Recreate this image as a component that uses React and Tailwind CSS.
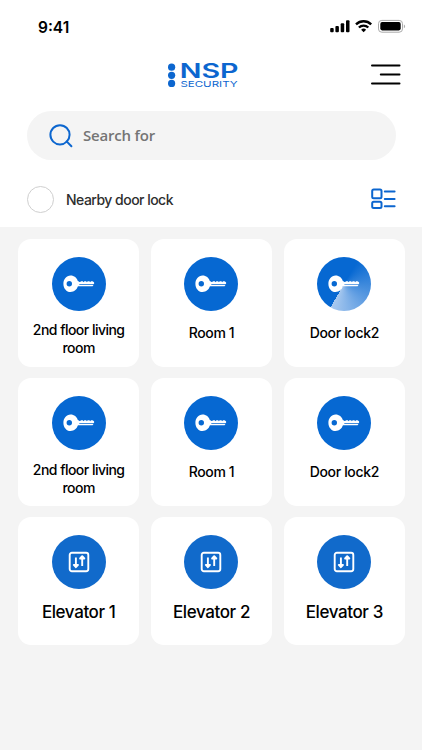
import React, { useState } from "react";

const DEVICES = [
  { name: "2nd floor living room", type: "key" },
  { name: "Room 1", type: "key" },
  { name: "Door lock2", type: "key", opening: true },
  { name: "2nd floor living room", type: "key" },
  { name: "Room 1", type: "key" },
  { name: "Door lock2", type: "key" },
  { name: "Elevator 1", type: "elevator" },
  { name: "Elevator 2", type: "elevator" },
  { name: "Elevator 3", type: "elevator" },
];

const StatusBar = () => (
  <div className="flex h-[52px] items-start justify-between pl-[38px] pr-[16px]">
    <span className="pt-[18px] text-[15.5px] font-semibold leading-5 text-black">9:41</span>
    <svg className="mt-[17px]" width="76" height="18" viewBox="0 0 76 18">
      <rect x="0.2" y="11" width="3.5" height="4.2" rx="1" />
      <rect x="5.4" y="9" width="3.5" height="6.2" rx="1" />
      <rect x="10.7" y="6.2" width="3.5" height="9" rx="1" />
      <rect x="16" y="3.2" width="3.5" height="12" rx="1" />
      <g fill="none" stroke="#000" strokeWidth="2.3">
        <path d="M26 7.4a10.8 10.8 0 0 1 15.2 0" />
        <path d="M28.9 10.5a6.7 6.7 0 0 1 9.4 0" />
      </g>
      <path d="M33.6 15.3l-2.5-2.5a3.6 3.6 0 0 1 5 0z" />
      <rect x="48.5" y="3.4" width="24" height="11.8" rx="3.3" fill="none" stroke="#aaa" />
      <rect x="50.3" y="5.1" width="20.4" height="8.3" rx="1.8" />
      <path d="M73.9 7.4v3.8c1.6-.7 1.6-3.1 0-3.8z" fill="#aaa" />
    </svg>
  </div>
);

const Logo = () => (
  <svg className="overflow-visible" width="74" height="26" viewBox="0 0 74 26" fill="#0c66cf">
    <circle cx="4.6" cy="4.2" r="3.6" />
    <circle cx="4.6" cy="12.3" r="3.6" />
    <circle cx="4.6" cy="20.4" r="3.6" />
    <text
      x="12.8"
      y="15"
      fontFamily="Inter, sans-serif"
      fontSize="19.8"
      fontWeight="600"
      textLength="58.8"
      lengthAdjust="spacingAndGlyphs"
    >
      NSP
    </text>
    <text
      x="13.4"
      y="24"
      fontFamily="Inter, sans-serif"
      fontSize="8.2"
      fontWeight="400"
      textLength="57.3"
      lengthAdjust="spacingAndGlyphs"
    >
      SECURITY
    </text>
  </svg>
);

const Header = () => (
  <header className="flex h-[59px] items-start justify-between pl-[167px] pr-[21px] pt-[11px]">
    <Logo />
    <button aria-label="Menu">
      <svg width="30" height="22" viewBox="0 0 30 22" stroke="#000" strokeWidth="2" strokeLinecap="round">
        <path d="M1 2.5h27.500M9.800 11.500h18.700M1 20.500h27.500" />
      </svg>
    </button>
  </header>
);

const SearchField = () => (
  <div className="ml-[27px] flex h-[49px] w-[369px] items-center rounded-full bg-[#f4f4f4] pl-[22px]">
    <svg width="24" height="24" viewBox="0 0 24 24" fill="none" stroke="#0c66cf" strokeWidth="2" strokeLinecap="round">
      <circle cx="11" cy="10.8" r="9.6" />
      <path d="M17.600 17.400l4.800 4.800" />
    </svg>
    <span className="ml-[10px] font-['Open_Sans',sans-serif] text-[15px] font-semibold tracking-[-0.2px] text-[#757575]">
      Search for
    </span>
  </div>
);

const KeyIcon = () => (
  <svg width="32" height="18" viewBox="0 0 32 18" fill="#fff">
    <path
      fillRule="evenodd"
      d="M7.5.4c3.8 0 6.4 2.4 7.3 5.5l1.5.9v4.2l-1.5.6c-1 3.1-3.6 5.4-7.3 5.4C3.4 17 .4 13.3.4 8.7S3.4.4 7.5.4zM6.3 6a2.7 2.7 0 1 0 0 5.4 2.7 2.7 0 0 0 0-5.4z"
    />
    <path d="M16 6.9h1.2l.8-.7h1.800l.8 1 .8-1h1.700l.8 1 .8-1h1.700l.8 1 .8-1h1.500l1.200.8.6 1-.5.900H16z" />
    <path d="M16 9.700h14.600l-1 1.500H16z" />
  </svg>
);

const ElevatorIcon = () => (
  <svg width="22" height="22" viewBox="0 0 22 22" fill="none" stroke="#fff" strokeWidth="1.9" strokeLinejoin="round">
    <rect x="1.7" y="1.7" width="18.6" height="18.6" rx="2.2" />
    <path d="M7.9 6.5v8M14.2 15v-7.5" />
    <path d="M5.8 13.9h4.2l-2.1 2.3zM12.1 7.5h4.2l-2.1-2.3z" fill="#fff" />
  </svg>
);

const DeviceCard = ({ name, type, opening }) => {
  const isKey = type === "key";
  const isLong = name.length > 12;

  return (
    <button className="flex h-32 flex-col items-center rounded-[13px] bg-white pt-[18px]">
      <span
        className={`flex size-[54px] shrink-0 items-center justify-center rounded-full ${
          opening
            ? "bg-[conic-gradient(from_30deg,#0668d2_0deg,#a9c9ef_180deg,#0668d2_180deg)]"
            : isKey
              ? "bg-[#0668d2]"
              : "bg-[#116acb]"
        }`}
      >
        {isKey ? <KeyIcon /> : <ElevatorIcon />}
      </span>
      <span
        className={
          !isKey
            ? "mt-[10.5px] text-[17px] font-medium leading-6 tracking-[-0.4px] text-black"
            : isLong
              ? "mt-[10.6px] w-[100px] text-center text-[14px] font-medium leading-[18px] tracking-[-0.52px] text-black"
              : "mt-[13px] text-[14px] font-medium leading-[18px] tracking-[-0.35px] text-black"
        }
      >
        {name}
      </span>
    </button>
  );
};

const App = () => {
  const [nearby, setNearby] = useState(false);

  return (
    <div className="flex min-h-[750px] w-[422px] flex-col bg-white font-[Inter,sans-serif]">
      <StatusBar />
      <Header />
      <SearchField />

      <div className="flex h-[67px] items-center justify-between pl-[27px] pr-[26px] pt-[12px]">
        <label className="flex items-center gap-[12px]">
          <button
            aria-label="Nearby door lock"
            onClick={() => setNearby(!nearby)}
            className={`size-[27px] rounded-full border border-[#cfcfcf] ${nearby ? "bg-[#0668d2]" : "bg-white"}`}
          />
          <span className="text-[14px] font-medium leading-5 tracking-[-0.52px] text-[#2e2e2e]">Nearby door lock</span>
        </label>
        <svg className="-mt-px" width="25" height="22" viewBox="0 0 25 22" fill="none" stroke="#0c66cf" strokeWidth="2" strokeLinecap="round">
          <rect x="1.2" y="1.4" width="9.3" height="8.8" rx="1.5" />
          <rect x="1.2" y="13.7" width="9.3" height="6.4" rx="1.5" />
          <path d="M13.8 3.6h9.8M13.8 10.9h9.8M13.8 18.2h9.8" />
        </svg>
      </div>

      <main className="grid flex-1 grid-cols-3 content-start gap-x-[11.5px] gap-y-[11.4px] bg-[#f4f4f4] pl-[18px] pr-[17px] pt-[11.6px]">
        {DEVICES.map((device, i) => (
          <DeviceCard key={i} {...device} />
        ))}
      </main>
    </div>
  );
};

export default App;
